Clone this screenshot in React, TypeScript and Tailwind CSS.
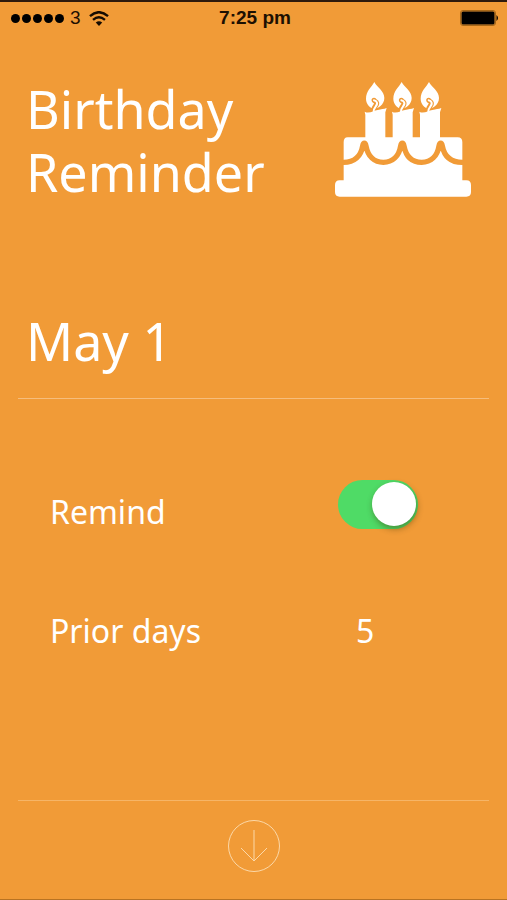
import { useState } from "react";

function WifiIcon() {
  return (
    <svg viewBox="0 0 57 44" className="h-[15px] w-5" aria-label="Wi-Fi">
      <g fill="none" stroke="#160c02" strokeWidth="7">
        <path d="M2 15 Q28 -8 55 15" />
        <path d="M11 26 Q28 11 46 26" />
      </g>
      <path d="M19 34 Q28 26 38 34 L28.500 44 Z" fill="#160c02" />
    </svg>
  );
}

function StatusBar() {
  return (
    <div className="grid h-[34px] grid-cols-3 items-center border-t-2 border-[#2e1a0c] pr-2 pl-[11px] font-['Liberation_Sans',Arial,sans-serif] text-[19px] text-[#1d1002]">
      <div className="flex items-center">
        <div className="flex gap-[2px]">
          {[0, 1, 2, 3, 4].map((dot) => (
            <span key={dot} className="size-[9px] rounded-full bg-black" />
          ))}
        </div>
        <span className="mr-2 ml-1.5">3</span>
        <WifiIcon />
      </div>
      <time className="text-center font-bold">7:25 pm</time>
      <svg viewBox="0 0 39 16" className="h-4 w-[39px] justify-self-end" aria-label="Battery full">
        <rect x="0.500" y="0.500" width="35" height="15" rx="2.500" fill="none" stroke="#a96918" />
        <rect x="1.500" y="1.500" width="33" height="13" rx="1.500" fill="#000" />
        <path d="M36.500 5 Q39.500 8 36.500 11 Z" fill="#000" />
      </svg>
    </div>
  );
}

function Candle({ x }: { x: number }) {
  return (
    <g transform={`translate(${x} 0)`}>
      <path d="M29 36 C21 51 4 63 4 86 C4 101 14 113 27 116 C39 116 59 105 59 84 C59 63 37 52 29 36 Z" fill="#fff" />
      <path d="M27 121 C26 109 41 105 35 97 C32 92 28 92 28 91" fill="none" stroke="#f19b37" strokeWidth="15" strokeLinecap="round" />
      <path d="M27 125 C26 111 43 105 36 96 C33 91 28 92 28 91" fill="none" stroke="#fff" strokeWidth="6" strokeLinecap="round" />
      <path d="M0 125 C13 132 27 122 39 120 C50 118 57 117 66 114 L62 127 V210 H2 V134 Z" fill="#fff" />
    </g>
  );
}

function CakeIcon() {
  return (
    <svg viewBox="44 36 408 345" className="h-[115px] w-[136px] shrink-0" aria-hidden="true">
      <Candle x={133} />
      <Candle x={215} />
      <Candle x={297} />
      <path
        d="M82 202 H412 Q426 202 426 216 V331 H438 Q452 331 452 345 V366 Q452 380 438 380 H58 Q44 380 44 366 V345 Q44 331 58 331 H70 V216 Q70 202 82 202 Z"
        fill="#fff"
      />
      <path
        d="M67 277 C103 278 122 258 127 228 C129 217 135 217 137 228 C143 260 162 277 189 277 C217 277 236 258 241 228 C243 217 249 217 251 228 C257 260 276 277 304 277 C332 277 351 258 356 228 C358 217 364 217 366 228 C372 260 392 278 429 277"
        fill="none"
        stroke="#f19b37"
        strokeWidth="16"
      />
    </svg>
  );
}

export default function App() {
  const [remind, setRemind] = useState(true);
  const [days, setDays] = useState("5");

  return (
    <div className="flex min-h-screen flex-col border-b border-[#b87322] bg-[#f19b37] font-['Noto_Sans','Open_Sans',sans-serif] text-white">
      <StatusBar />

      <header className="flex items-start justify-between pt-[43px] pr-9 pl-[26px]">
        <h1 className="text-[52px] leading-[63px]">
          Birthday
          <br />
          Reminder
        </h1>
        <div className="pt-[5px]">
          <CakeIcon />
        </div>
      </header>

      <main className="flex grow flex-col px-[18px]">
        <h2 className="mt-[106px] border-b border-[#f6bd7c] pb-[26px] pl-2 text-[52px] leading-[63px]">May 1</h2>

        <div className="mt-[73px] grid grid-cols-[288px_1fr] items-center pl-8">
          <label htmlFor="remind" className="pt-4 text-[32px] leading-[48px]">
            Remind
          </label>
          <input
            id="remind"
            type="checkbox"
            role="switch"
            checked={remind}
            onChange={(e) => setRemind(e.target.checked)}
            className="flex h-[49px] w-20 cursor-pointer appearance-none items-center rounded-full bg-[#c98a45] px-[2px] before:size-11 before:rounded-full before:bg-white before:shadow-[1px_3px_6px_rgba(60,50,0,0.45)] checked:justify-end checked:bg-[#4fdb66]"
          />
        </div>

        <div className="mt-[71px] grid grid-cols-[306px_1fr] items-center pl-8">
          <label htmlFor="days" className="text-[32px] leading-[48px]">
            Prior days
          </label>
          <input
            id="days"
            type="text"
            inputMode="numeric"
            value={days}
            onChange={(e) => setDays(e.target.value)}
            className="w-16 bg-transparent text-[32px] leading-[48px] outline-none"
          />
        </div>
      </main>

      <footer className="mx-[18px] flex h-[99px] justify-center border-t border-[#f6b567] pt-[19px]">
        <button type="button" aria-label="Scroll down" className="size-[52px] cursor-pointer">
          <svg viewBox="0 0 52 52" className="size-full" fill="none" stroke="#fbd8a8" strokeWidth="1">
            <circle cx="26" cy="26" r="25.500" />
            <path d="M26 10 V41 M13 28 L26 41 L39 28" />
          </svg>
        </button>
      </footer>
    </div>
  );
}
